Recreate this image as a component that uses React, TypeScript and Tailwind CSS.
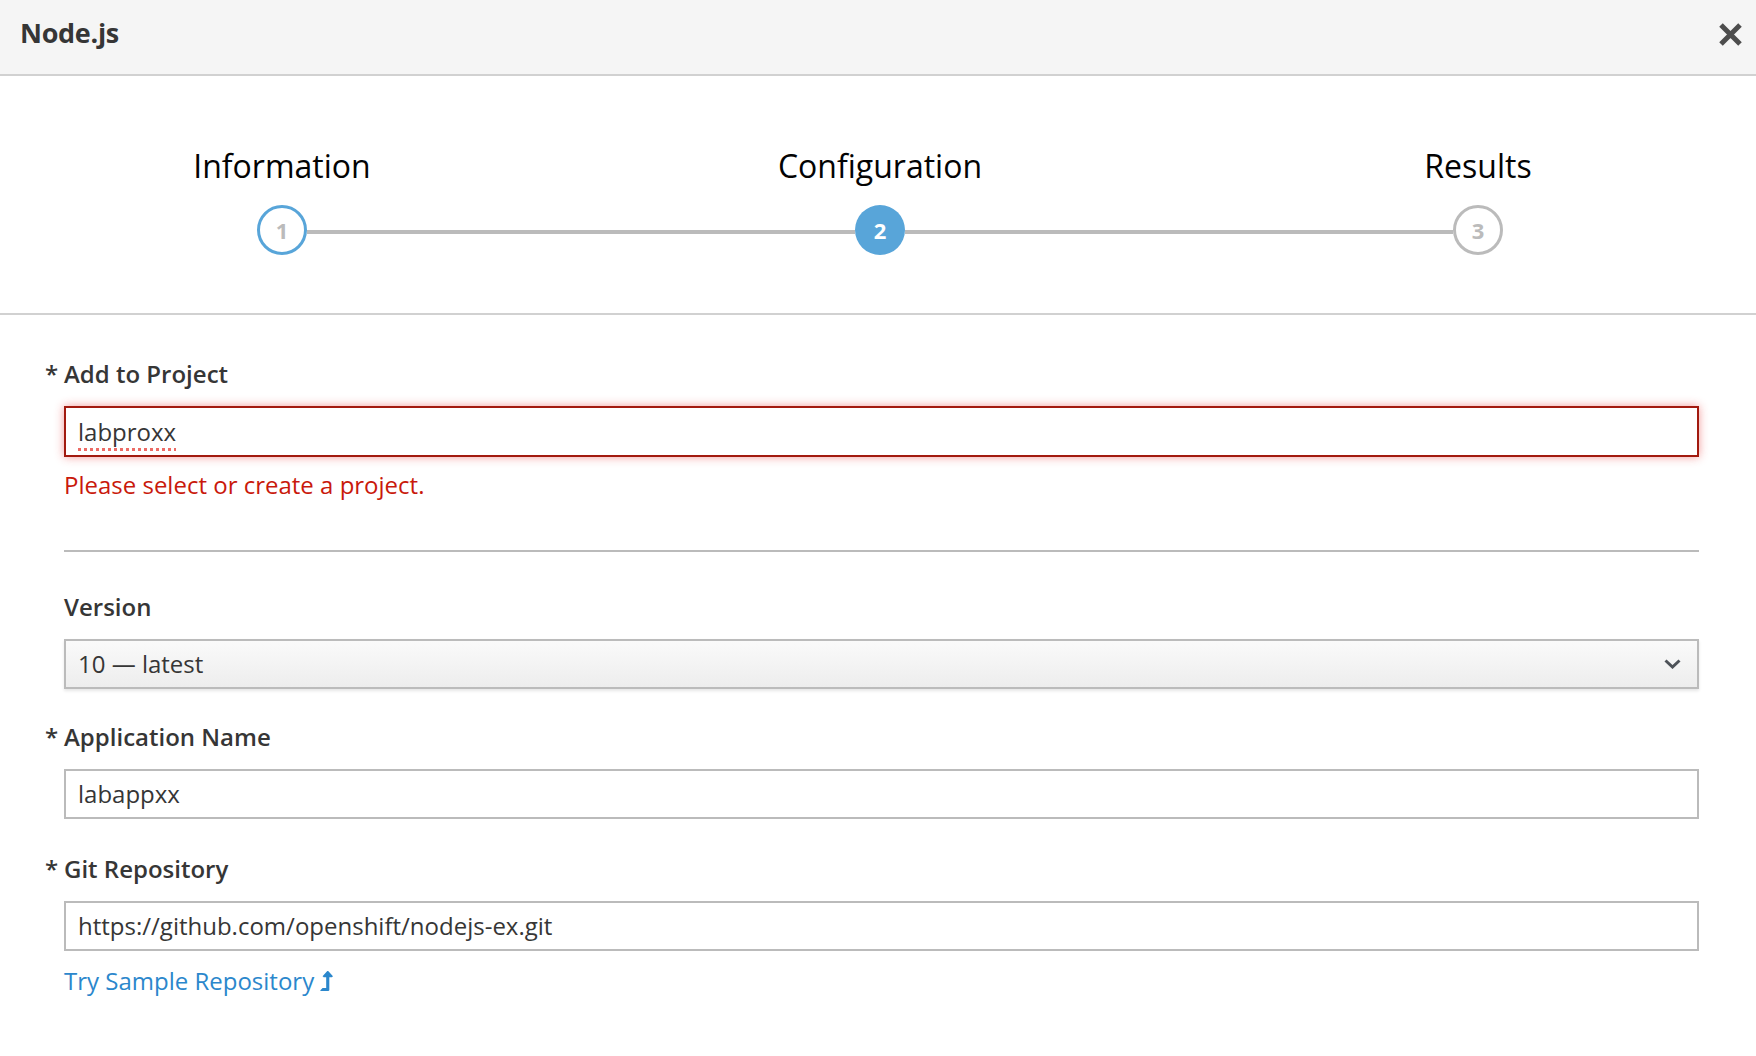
import React from 'react';
import { FaLevelUpAlt } from 'react-icons/fa';

const font = { fontFamily: '"Open Sans", "Liberation Sans", sans-serif' };

type StepState = 'done' | 'active' | 'todo';

const steps: { label: string; n: number; state: StepState }[] = [
  { label: 'Information', n: 1, state: 'done' },
  { label: 'Configuration', n: 2, state: 'active' },
  { label: 'Results', n: 3, state: 'todo' },
];

const StepCircle: React.FC<{ n: number; state: StepState }> = ({ n, state }) => {
  if (state === 'active') {
    return (
      <div className="w-[50px] h-[50px] rounded-full bg-[#58a5d9] flex items-center justify-center shrink-0">
        <span className="text-white text-[22px] font-bold leading-none">{n}</span>
      </div>
    );
  }
  return (
    <div
      className={`w-[50px] h-[50px] rounded-full bg-white border-[3px] flex items-center justify-center shrink-0 ${
        state === 'done' ? 'border-[#58a5d9]' : 'border-[#bbbbbb]'
      }`}
    >
      <span className="text-[#bbbbbb] text-[22px] font-bold leading-none">{n}</span>
    </div>
  );
};

const Label: React.FC<{ text: string; required?: boolean }> = ({ text, required }) => (
  <div className="text-[24px] leading-[33px] font-semibold text-[#363636]">
    {required && <span className="-ml-[19px] inline-block w-[19px]">*</span>}
    {text}
  </div>
);

const TextBox: React.FC<{ value: string }> = ({ value }) => (
  <div className="mt-4 h-[50px] border-2 border-[#bbbbbb] bg-white px-[12px] flex items-center text-[24px] text-[#363636]">
    {value}
  </div>
);

export default function App() {
  return (
    <div className="w-[1756px] h-[1056px] bg-white overflow-hidden" style={font}>
      {/* modal header */}
      <div className="h-[76px] bg-[#f5f5f5] border-b-2 border-[#d1d1d1] flex items-center justify-between pl-[20px] pr-[13px]">
        <h1 className="text-[27px] font-bold text-[#363636] -mt-[8px] tracking-[-0.3px]">Node.js</h1>
        <button className="w-[25px] h-[25px] -mt-[6px]">
          <svg viewBox="0 0 25 25" width="25" height="25">
            <path d="M3 3 L22 22 M22 3 L3 22" stroke="#4d4d4d" strokeWidth="5" />
          </svg>
        </button>
      </div>

      {/* wizard steps */}
      <div className="border-b-2 border-[#d1d1d1] pt-[68px] pb-[58px] overflow-hidden">
        <div className="flex -ml-[17px]">
          {steps.map((s, i) => (
            <div key={s.label} className="w-[598px] shrink-0 flex flex-col items-center">
              <div className="text-[32px] leading-[44px] text-[#030303]">{s.label}</div>
              <div className="mt-[17px] w-full flex items-center">
                <div className={`flex-1 h-[4px] mt-1 ${i === 0 ? '' : 'bg-[#bbbbbb]'}`} />
                <StepCircle n={s.n} state={s.state} />
                <div className={`flex-1 h-[4px] mt-1 ${i === steps.length - 1 ? '' : 'bg-[#bbbbbb]'}`} />
              </div>
            </div>
          ))}
        </div>
      </div>

      {/* form */}
      <div className="pl-[64px] pr-[57px] pt-[42px]">
        <Label text="Add to Project" required />
        <div className="mt-4 h-[51px] border-2 border-[#a21a0f] bg-white px-[12px] flex items-center text-[24px] text-[#363636] shadow-[0_0_9px_rgba(230,30,30,0.45)]">
          <span className="underline decoration-dotted decoration-[#ec6b65] decoration-3 underline-offset-[7px]">
            labproxx
          </span>
        </div>
        <div className="mt-[11px] text-[24px] leading-[33px] text-[#c9190b]">
          Please select or create a project.
        </div>

        <div className="mt-[49px] h-[2px] bg-[#bbbbbb]" />

        <div className="mt-[38px]">
          <Label text="Version" />
          <div className="mt-4 h-[50px] border-2 border-[#bbbbbb] bg-gradient-to-b from-[#fafafa] to-[#ededed] shadow-[0_2px_3px_rgba(3,3,3,0.1)] pl-[12px] pr-[16px] flex items-center justify-between text-[24px] text-[#363636]">
            <span>10 — latest</span>
            <svg width="17" height="10" viewBox="0 0 17 10">
              <path d="M1.5 1.5 L8.5 8 L15.5 1.5" fill="none" stroke="#4d5258" strokeWidth="3" />
            </svg>
          </div>
        </div>

        <div className="mt-[31px]">
          <Label text="Application Name" required />
          <TextBox value="labappxx" />
        </div>

        <div className="mt-[33px]">
          <Label text="Git Repository" required />
          <TextBox value="https://github.com/openshift/nodejs-ex.git" />
        </div>

        <a className="mt-[13px] inline-flex items-center gap-[6px] text-[24px] leading-[33px] text-[#2b87cc] cursor-pointer">
          Try Sample Repository
          <FaLevelUpAlt className="w-[13px] h-[20px]" />
        </a>
      </div>
    </div>
  );
}
